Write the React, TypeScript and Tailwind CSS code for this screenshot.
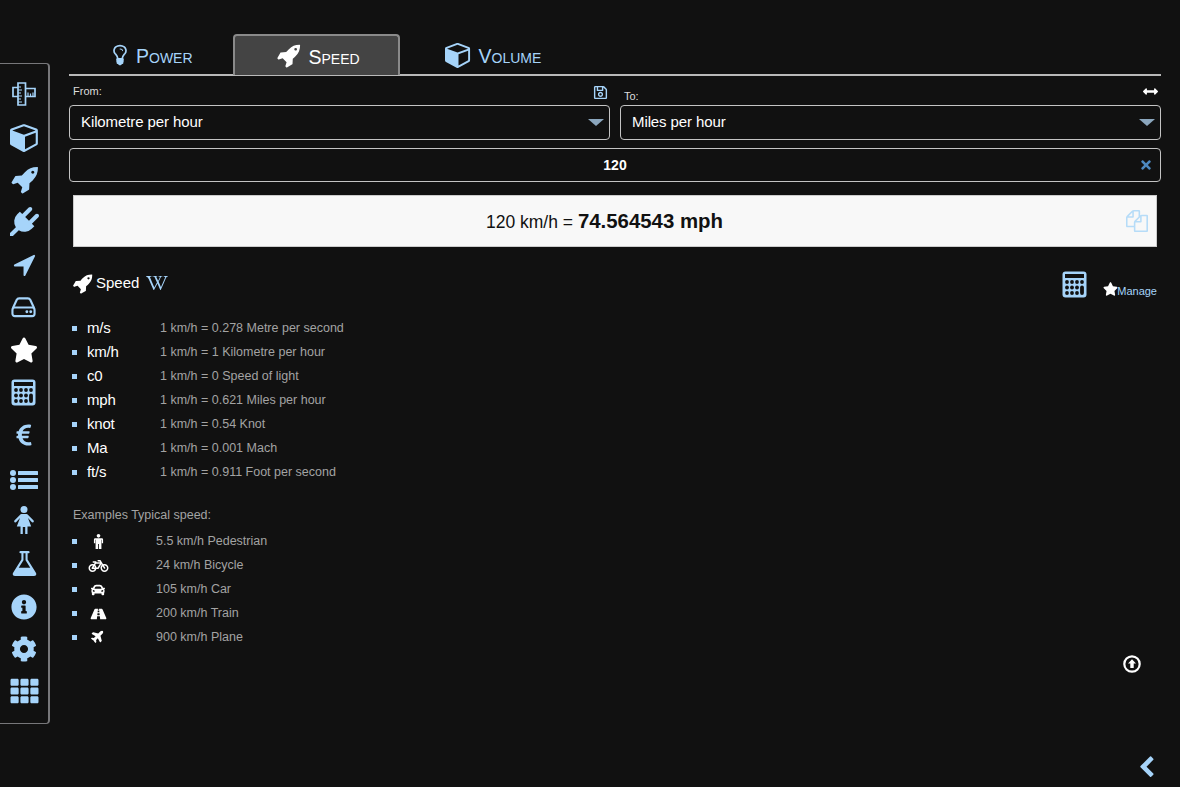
import {
  FaArrowsAltH,
  FaBicycle,
  FaCar,
  FaCog,
  FaEuroSign,
  FaInfoCircle,
  FaPlane,
  FaRegSave,
  FaRoad,
  FaStar,
  FaTh,
  FaTimes,
  FaWikipediaW,
} from "react-icons/fa"

function FaFour({ d, className }: { d: string; className?: string }) {
  return (
    <svg viewBox="0 0 1792 1792" fill="currentColor" className={className}>
      <path d={d} />
    </svg>
  )
}

const rocket =
  "M1504 448q0-40-28-68t-68-28-68 28-28 68 28 68 68 28 68-28 28-68zm224-288q0 249-75.5 430.5t-253.5 360.5q-81 80-195 176l-20 379q-2 16-16 26l-384 224q-7 4-16 4-12 0-23-9l-64-64q-13-14-8-32l85-276-281-281-276 85q-3 1-9 1-14 0-23-9l-64-64q-17-19-5-39l224-384q10-14 26-16l379-20q96-114 176-195 188-187 358-258t431-71q14 0 24 9.5t10 22.5z"
const cube =
  "M896 1629l640-349v-636l-640 233v752zm-64-865l698-254-698-254-698 254zm832-252v768q0 35-18 65t-49 47l-704 384q-28 16-61 16t-61-16l-704-384q-31-17-49-47t-18-65v-768q0-40 23-73t61-47l704-256q22-8 44-8t44 8l704 256q38 14 61 47t23 73z"
const bulb =
  "M1120 576q0 13-9.5 22.5t-22.5 9.5-22.5-9.5-9.5-22.5q0-46-54-71t-106-25q-13 0-22.5-9.5t-9.5-22.5 9.5-22.5 22.5-9.5q50 0 99.5 16t87 54 37.5 90zm160 0q0-72-34.5-134t-90-101.5-123-62-136.5-22.5-136.5 22.5-123 62-90 101.5-34.5 134q0 101 68 180 10 11 30.5 33t30.5 33q128 153 141 298h228q13-145 141-298 10-11 30.5-33t30.5-33q68-79 68-180zm128 0q0 155-103 268-45 49-74.5 87t-59.5 95.5-34 107.5q47 28 47 82 0 37-25 64 25 27 25 64 0 52-45 81 13 23 13 47 0 46-31.5 71t-77.5 25q-20 44-60 70t-87 26-87-26-60-70q-46 0-77.5-25t-31.5-71q0-24 13-47-45-29-45-81 0-37 25-64-25-27-25-64 0-54 47-82-4-50-34-107.5t-59.5-95.5-74.5-87q-103-113-103-268 0-99 44.5-184.5t117-142 164-89 186.5-32.5 186.5 32.5 164 89 117 142 44.5 184.5z"
const plug =
  "M1755 453q37 38 37 90.5t-37 90.5l-401 400 150 150-160 160q-163 163-389.5 186.5t-411.5-100.5l-362 362h-181v-181l362-362q-124-185-100.5-411.5t186.5-389.5l160-160 150 150 400-401q38-37 91-37t90 37 37 90.5-37 90.5l-400 401 234 234 401-400q38-37 91-37t90 37z"
const arrow =
  "M1593 349l-640 1280q-17 35-57 35-5 0-15-2-22-5-35.5-22.5t-13.5-39.5v-576h-576q-22 0-39.5-13.5t-22.5-35.5 4-42 29-30l1280-640q13-7 29-7 27 0 45 19 15 14 18.5 34.5t-6.5 39.5z"
const flask =
  "M1591 1448q56 89 21.5 152.5t-140.5 63.5h-1152q-106 0-140.5-63.5t21.5-152.5l503-793v-399h-64q-26 0-45-19t-19-45 19-45 45-19h512q26 0 45 19t19 45-19 45-45 19h-64v399zm-779-725l-272 429h712l-272-429-20-31v-436h-128v436z"
const files =
  "M1696 384q40 0 68 28t28 68v1216q0 40-28 68t-68 28h-960q-40 0-68-28t-28-68v-288h-544q-40 0-68-28t-28-68v-672q0-40 20-88t48-76l408-408q28-28 76-48t88-20h416q40 0 68 28t28 68v328q68-40 128-40h416zm-544 213l-299 299h299v-299zm-640-384l-299 299h299v-299zm194 647l316-316v-416h-384v416q0 40-28 68t-68 28h-416v640h512v-256q0-40 20-88t48-76zm956 804v-1152h-384v416q0 40-28 68t-68 28h-416v640h896z"
const chevron =
  "M1427 301l-531 531 531 531q19 19 19 45t-19 45l-166 166q-19 19-45 19t-45-19l-742-742q-19-19-19-45t19-45l742-742q19-19 45-19t45 19l166 166q19 19 19 45t-19 45z"

function RulerIcon({ className }: { className?: string }) {
  return (
    <svg viewBox="0 0 24 24" fill="none" stroke="currentColor" strokeWidth="1.7" className={className}>
      <path d="M1 5.500h5v9H1zM6 1h7.500v22H6zM13.500 6.500H23v8h-9.500z" />
      <path d="M6 5h3M6 8h4M6 11h3M6 14h4M6 17h3M6 20h4M16 14.500v-4M18.500 14.500v-3M21 14.500v-4" strokeWidth="1.2" />
    </svg>
  )
}

function CalculatorIcon({ className }: { className?: string }) {
  const rows = [11, 16.5, 22]
  const cols = [5, 10, 15]
  return (
    <svg viewBox="0 0 25 27" className={className}>
      <rect x="0.5" y="0.5" width="24" height="26" rx="3" fill="currentColor" />
      <rect x="3" y="3" width="19" height="4" fill="#111111" />
      {rows.map((y) =>
        cols.map((x) => <circle key={`${x}-${y}`} cx={x} cy={y} r="1.9" fill="#111111" />),
      )}
      <circle cx="20" cy="11" r="1.9" fill="#111111" />
      <rect x="18.1" y="14.6" width="3.8" height="9.3" rx="1.9" fill="#111111" />
    </svg>
  )
}

function HddIcon({ className }: { className?: string }) {
  return (
    <svg viewBox="0 0 26 22" fill="none" stroke="currentColor" strokeWidth="2.2" className={className}>
      <path d="M2 12 6 3.500Q6.600 2 8.500 2h9q1.900 0 2.500 1.500L24 12" />
      <rect x="1.500" y="11.500" width="23" height="9" rx="2.500" />
      <circle cx="16.500" cy="16" r="1.500" fill="currentColor" stroke="none" />
      <circle cx="20.500" cy="16" r="1.500" fill="currentColor" stroke="none" />
    </svg>
  )
}

function ListIcon({ className }: { className?: string }) {
  return (
    <svg viewBox="0 0 28 20" fill="currentColor" className={className}>
      <circle cx="3" cy="3" r="3" />
      <circle cx="3" cy="10" r="3" />
      <circle cx="3" cy="17" r="3" />
      <rect x="8" y="1" width="20" height="4" rx="0.500" />
      <rect x="8" y="8" width="20" height="4" rx="0.500" />
      <rect x="8" y="15" width="20" height="4" rx="0.500" />
    </svg>
  )
}

function FemaleIcon({ className }: { className?: string }) {
  return (
    <svg viewBox="0 0 20 28" fill="currentColor" className={className}>
      <circle cx="10" cy="3.500" r="3.500" />
      <path d="M7.500 8h5q1 0 1.600 1L19.600 14.500q.6 1-.2 1.700-.9.7-1.700-.1L14 12l3.200 8.500H13.500V28h-2.300v-7h-2.400v7H6.500v-7.500H2.800L6 12l-3.700 4.100q-.8.800-1.700.1-.8-.7-.2-1.700L5.900 9q.6-1 1.600-1z" />
    </svg>
  )
}

function MaleIcon({ className }: { className?: string }) {
  return (
    <svg viewBox="0 0 12 18" fill="currentColor" className={className}>
      <circle cx="6" cy="2.200" r="2.200" />
      <path d="M2 5h8q1.500 0 1.500 1.500V11H10v-4H9.500v11H6.500v-6h-1v6H2.500V7H2v4H.5V6.500Q.5 5 2 5z" />
    </svg>
  )
}

function UpCircleIcon({ className }: { className?: string }) {
  return (
    <svg viewBox="0 0 18 18" className={className}>
      <circle cx="9" cy="9" r="7.700" fill="none" stroke="currentColor" strokeWidth="2.200" />
      <path d="M9 4.200 13 8.400H10.700V13H7.300V8.400H5z" fill="currentColor" />
    </svg>
  )
}

function Tab({ label, icon, active }: { label: string; icon: React.ReactNode; active?: boolean }) {
  return (
    <div
      className={
        active
          ? "-mb-[2px] flex h-[41px] w-[167px] items-center justify-center gap-[7px] rounded-t-[4px] border-2 border-b-0 border-[#8a8a8a] bg-[#444444] pl-[4px] text-white"
          : "flex h-[41px] items-center justify-center gap-[7px] text-[#a6d4fa]"
      }
    >
      {icon}
      <span className="pt-[5px] text-[19.5px] leading-none [font-variant:small-caps]">{label}</span>
    </div>
  )
}

function Select({ label, width }: { label: string; width: string }) {
  return (
    <div className={`${width} flex h-[35px] items-center justify-between rounded-[4px] border border-[#c4c4c4] pl-[11px] pr-[4px]`}>
      <span className="text-[15px] tracking-[-0.1px] text-white">{label}</span>
      <span className="mr-[1px] h-0 w-0 border-x-[8px] border-t-[7px] border-x-transparent border-t-[#8ba6bd]" />
    </div>
  )
}

const sideIcons = [
  <RulerIcon className="h-[24px] w-[24px]" />,
  <FaFour d={cube} className="ml-[1px] h-[30px] w-[30px]" />,
  <FaFour d={rocket} className="h-[29px] w-[29px]" />,
  <FaFour d={plug} className="h-[29px] w-[29px]" />,
  <FaFour d={arrow} className="h-[27px] w-[27px]" />,
  <HddIcon className="mr-[1px] h-[22px] w-[25px]" />,
  <FaStar className="h-[26px] w-[28px] text-white" />,
  <CalculatorIcon className="mr-[2px] h-[27px] w-[25px]" />,
  <FaEuroSign className="h-[24px] w-[18px]" />,
  <ListIcon className="mt-[4px] h-[20px] w-[28px]" />,
  <FemaleIcon className="h-[28px] w-[20px]" />,
  <FaFour d={flask} className="h-[29px] w-[29px]" />,
  <FaInfoCircle className="mt-[2px] h-[26px] w-[26px]" />,
  <FaCog className="mt-[1px] h-[26px] w-[26px]" />,
  <FaTh className="h-[28px] w-[29px]" />,
]

const units = [
  ["m/s", "1 km/h = 0.278 Metre per second"],
  ["km/h", "1 km/h = 1 Kilometre per hour"],
  ["c0", "1 km/h = 0 Speed of light"],
  ["mph", "1 km/h = 0.621 Miles per hour"],
  ["knot", "1 km/h = 0.54 Knot"],
  ["Ma", "1 km/h = 0.001 Mach"],
  ["ft/s", "1 km/h = 0.911 Foot per second"],
]

const examples = [
  { icon: <MaleIcon className="h-[15px] w-[11px]" />, text: "5.5 km/h Pedestrian" },
  { icon: <FaBicycle className="h-[16px] w-[21px]" />, text: "24 km/h Bicycle" },
  { icon: <FaCar className="h-[14px] w-[16px]" />, text: "105 km/h Car" },
  { icon: <FaRoad className="h-[14px] w-[17px]" />, text: "200 km/h Train" },
  { icon: <FaPlane className="-mt-[3px] h-[14px] w-[14px] -rotate-45" />, text: "900 km/h Plane" },
]

export default function App() {
  return (
    <div className="relative flex h-[787px] w-[1180px] overflow-hidden bg-[#111111] font-['Liberation_Sans',Arial,sans-serif]">
      {/* menu kiri */}
      <aside className="mt-[63px] flex h-[661px] w-[50px] shrink-0 flex-col items-center justify-between rounded-r-[4px] border-y border-r-2 border-[#77777a] pb-[18px] pt-[16px] text-[#a6d4fa]">
        {sideIcons.map((icon, i) => (
          <div key={i} className="flex h-[28px] items-center justify-center">
            {icon}
          </div>
        ))}
      </aside>

      <main className="ml-[19px] w-[1092px] shrink-0 pt-[34px]">
        {/* tab */}
        <div className="flex h-[42px] border-b-2 border-[#b9b9b9] pl-[39px]">
          <Tab label="Power" icon={<FaFour d={bulb} className="-mr-[3px] h-[24px] w-[24px]" />} />
          <div className="w-[40px]" />
          <Tab label="Speed" active icon={<FaFour d={rocket} className="h-[25px] w-[25px]" />} />
          <div className="w-[45px]" />
          <Tab label="Volume" icon={<FaFour d={cube} className="h-[27px] w-[27px]" />} />
        </div>

        <div className="flex h-[29px] text-[11px] text-[#dddddd]">
          <div className="flex w-[541px] items-center justify-between pl-[4px] pr-[2px]">
            <span className="mt-[1px]">From:</span>
            <FaRegSave className="mt-[3px] h-[15px] w-[15px] text-[#a6d4fa]" />
          </div>
          <div className="ml-[10px] flex flex-1 items-center justify-between pl-[4px] pr-[3px]">
            <span className="mt-[11px]">To:</span>
            <FaArrowsAltH className="mt-[1px] h-[15px] w-[15px] text-white" />
          </div>
        </div>

        <div className="flex gap-[10px]">
          <Select label="Kilometre per hour" width="w-[541px]" />
          <Select label="Miles per hour" width="w-[541px]" />
        </div>

        <div className="relative mt-[8px] flex h-[34px] items-center justify-center rounded-[4px] border border-[#c4c4c4] text-[14px] font-bold text-white">
          120
          <FaTimes className="absolute right-[7px] h-[14px] w-[14px] text-[#4d89c0]" />
        </div>

        <div className="relative mx-[4px] mt-[13px] flex h-[52px] items-center justify-center border border-[#cccccc] bg-[#f8f8f8] pr-[21px] text-[#111111]">
          <span className="text-[17.5px]">
            120 km/h = <b className="text-[20.4px]">74.564543 mph</b>
          </span>
          <FaFour d={files} className="absolute right-[8px] h-[22px] w-[22px] text-[#b6dcf8]" />
        </div>

        <div className="mt-[22px] flex h-[28px] items-center px-[4px]">
          <FaFour d={rocket} className="-ml-[1px] h-[21px] w-[21px] text-white" />
          <span className="ml-[3px] text-[15px] text-white">Speed</span>
          <FaWikipediaW className="ml-[7px] h-[22px] w-[22px] text-[#a6d4fa]" />
          <CalculatorIcon className="ml-auto mt-[2px] h-[27px] w-[25px] text-[#a6d4fa]" />
          <FaStar className="-mr-[1px] ml-[16px] mt-[12px] h-[14px] w-[15px] text-white" />
          <span className="mt-[16px] text-[11px] text-[#a6d4fa]">Manage</span>
        </div>

        <ul className="mt-[19px] pl-[3px]">
          {units.map(([u, d]) => (
            <li key={u} className="flex h-[24px] items-center">
              <span className="h-[5px] w-[5px] bg-[#a6d4fa]" />
              <span className="ml-[10px] w-[73px] text-[15px] tracking-[-0.2px] text-white">{u}</span>
              <span className="text-[12.5px] text-[#a3a3a3]">{d}</span>
            </li>
          ))}
        </ul>

        <p className="mt-[22px] pl-[4px] text-[12.5px] text-[#a3a3a3]">Examples Typical speed:</p>
        <ul className="mt-[5px] pl-[3px]">
          {examples.map((e) => (
            <li key={e.text} className="flex h-[24px] items-center">
              <span className="h-[5px] w-[5px] bg-[#a6d4fa]" />
              <span className="ml-[8px] flex w-[26px] justify-center text-white">{e.icon}</span>
              <span className="ml-[45px] text-[12.5px] text-[#a3a3a3]">{e.text}</span>
            </li>
          ))}
        </ul>
      </main>

      <UpCircleIcon className="absolute left-[1123px] top-[655px] h-[18px] w-[18px] text-white" />
      <FaFour d={chevron} className="absolute left-[1135px] top-[756px] h-[23px] w-[23px] text-[#a6d4fa]" />
    </div>
  )
}
